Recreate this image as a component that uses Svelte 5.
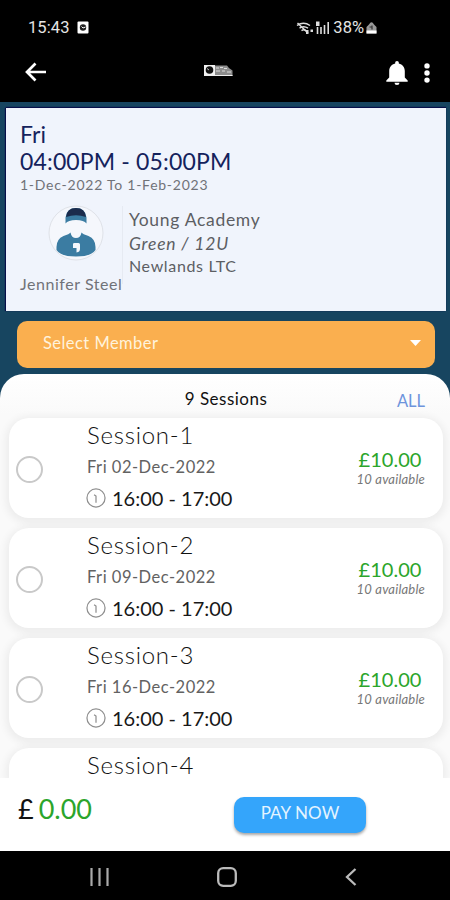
<script>
  // Sessions still open for booking; the last one sits behind the payment bar
  const sessions = [
    { id: 1, name: 'Session-1', date: 'Fri 02-Dec-2022', time: '16:00 - 17:00', price: '£10.00', available: 10 },
    { id: 2, name: 'Session-2', date: 'Fri 09-Dec-2022', time: '16:00 - 17:00', price: '£10.00', available: 10 },
    { id: 3, name: 'Session-3', date: 'Fri 16-Dec-2022', time: '16:00 - 17:00', price: '£10.00', available: 10 },
    { id: 4, name: 'Session-4', collapsed: true },
  ];

  let selected = $state([]);

  let total = $derived((selected.length * 10).toFixed(2));

  function toggle(id) {
    selected = selected.includes(id) ? selected.filter((s) => s !== id) : [...selected, id];
  }

  function selectAll() {
    selected = sessions.map((s) => s.id);
  }
</script>

<div class="screen">
  <!-- Status bar -->
  <div class="status-bar">
    <span class="clock">15:43</span>
    <svg class="alarm" width="12" height="13" viewBox="0 0 12 13" aria-hidden="true">
      <rect x="0.5" y="0.5" width="11" height="12" rx="1" fill="#fff" />
      <circle cx="6" cy="6.5" r="3.2" fill="#222" />
      <path d="M4.5 5.5 6 7l2.5-1" fill="none" stroke="#fff" stroke-width="1" />
    </svg>
    <div class="signals">
      <svg width="35" height="14" viewBox="0 0 35 14" aria-hidden="true">
        <g fill="none" stroke="#ddd" stroke-width="1.5">
          <path d="M1 4.500q6.500-4.500 13 0" />
          <path d="M3.500 7.200q4-2.800 8.500 0" />
          <path d="M5.500 9.700q2.500-1.800 4.500 0" />
          <path d="M1.500 2 12 12" />
        </g>
        <path d="M10 9h2.500v4H10zM14.500 8.500h2.500v2.500h-2.500z" fill="#ddd" />
        <path d="M20 .500h3.500v4.500H20z" fill="#ddd" />
        <path d="M21.500 6v7M25 6v7M28.500 4v9M32.200 1v12" stroke="#ddd" stroke-width="1.600" />
      </svg>
      <span class="battery">38%</span>
      <svg width="11" height="13" viewBox="0 0 11 13" aria-hidden="true">
        <path d="M3 3.500Q5.500-1 8 3.500L10.500 6v6.500H.500V6z" fill="#999" />
        <path d="M.500 9.500h10v3H.500z" fill="#fff" />
        <path d="M3.500 6h3M6 4.500v4" stroke="#333" stroke-width="1.200" />
      </svg>
    </div>
  </div>

  <!-- App bar -->
  <header class="app-bar">
    <button class="icon-btn" aria-label="Back">
      <svg width="22" height="20" viewBox="0 0 22 20">
        <path d="M21 10H2M10.500 1.500 2 10l8.500 8.500" fill="none" stroke="#fff" stroke-width="2.700" />
      </svg>
    </button>
    <svg class="logo" width="29" height="12" viewBox="0 0 29 12" aria-hidden="true">
      <path d="M0 0h11v11H0z" fill="#f2f2f2" />
      <circle cx="5.500" cy="5" r="3.800" fill="#111" />
      <path d="M3 3.500 5 5" fill="none" stroke="#bbb" />
      <path d="M11 .500h12q1.500 3 5.500 5v5.500H11z" fill="#8d8d8d" />
      <path d="M12 3h3M16 2.500h3M20 3.500h3M12 6h4M18 6h3M23 7h4" stroke="#ddd" />
      <path d="M0 10.500h28.500" stroke="#eee" />
    </svg>
    <div class="actions">
      <svg width="22" height="24" viewBox="0 0 22 24" aria-label="Notifications">
        <path d="M11 0c-1.100 0-1.800.800-1.800 1.800v.600C5.500 3.300 3.200 6.300 3.200 10v6.500L.300 19.500v1.200h21.400v-1.200L18.800 16.500V10c0-3.700-2.300-6.700-6-7.600v-.600C12.800.800 12.100 0 11 0zM8.500 21.700a2.500 2.200 0 0 0 5 0z" fill="#fff" />
      </svg>
      <svg class="more" width="6" height="20" viewBox="0 0 6 20" aria-label="More">
        <g fill="#fff">
          <circle cx="3" cy="2.900" r="2.700" />
          <circle cx="3" cy="10" r="2.700" />
          <circle cx="3" cy="17.100" r="2.700" />
        </g>
      </svg>
    </div>
  </header>

  <section class="hero">
    <div class="class-card">
      <div class="day">Fri</div>
      <div class="hours">04:00PM - 05:00PM</div>
      <div class="range">1-Dec-2022 To 1-Feb-2023</div>
      <div class="class-info">
        <div class="coach">
          <svg class="avatar" width="56" height="56" viewBox="0 0 56 56" aria-hidden="true">
            <circle cx="28" cy="28" r="27" fill="#f5f7fc" stroke="#dfe2e8" />
            <path d="M17.500 18.500V12.500Q18.500 3 28 3t10.500 9.500v6q-2.500-3.500-10.500-3.500t-10.500 3.500z" fill="#3b7ca2" />
            <path d="M18 12Q19 3 28 3t10 9q-10-3.500-20 0z" fill="#1b2b4c" />
            <path d="M22.500 27.500q1 5.500 5.500 5.500t5.500-5.500q1 1.500 7 3.500 7 3 7 11v3q-4 6.500-19.500 6.500T8.500 45v-3q0-8 7-11 6-2 7-3.500z" fill="#3b7ca2" />
            <path d="M25 39q0-1 1.500-1h4q1.500 0 1.500 1.500V44q0 3-3.500 3.500V43H25z" fill="#f5f7fc" />
          </svg>
          <span class="coach-name">Jennifer Steel</span>
        </div>
        <div class="venue">
          <span>Young Academy</span>
          <span class="level">Green / 12U</span>
          <span class="club">Newlands LTC</span>
        </div>
      </div>
    </div>

    <button class="member-select">
      <span>Select Member</span>
      <svg width="11" height="6" viewBox="0 0 11 6" aria-hidden="true"><path d="M0 0h11L5.500 6z" fill="#fff" /></svg>
    </button>
  </section>

  <main class="sheet">
    <div class="sheet-head">
      <span class="count">9 Sessions</span>
      <button class="all" onclick={selectAll}>ALL</button>
    </div>
    <div class="list">
      {#each sessions as session (session.id)}
        <article class="session" class:collapsed={session.collapsed}>
          {#if session.collapsed}
            <div class="name">{session.name}</div>
          {:else}
            <button
              class="radio"
              class:checked={selected.includes(session.id)}
              aria-label="Select {session.name}"
              onclick={() => toggle(session.id)}
            ></button>
            <div class="details">
              <div class="name">{session.name}</div>
              <div class="date">{session.date}</div>
              <div class="time">
                <svg width="20" height="20" viewBox="0 0 21 21" aria-hidden="true">
                  <circle cx="10.500" cy="10.500" r="9.500" fill="none" stroke="#8f8f8f" stroke-width="1.300" />
                  <path d="M8.500 7l2 1.500v7" fill="none" stroke="#8f8f8f" stroke-width="1.300" />
                </svg>
                <span>{session.time}</span>
              </div>
            </div>
            <div class="cost">
              <div class="price">{session.price}</div>
              <div class="available">{session.available} available</div>
            </div>
          {/if}
        </article>
      {/each}
    </div>
  </main>

  <footer class="pay-bar">
    <div class="total"><span class="currency">£</span><span class="amount">{total}</span></div>
    <button class="pay">PAY NOW</button>
  </footer>

  <!-- Android navigation -->
  <nav class="nav-bar">
    <svg width="19" height="18" viewBox="0 0 19 18" aria-label="Recents">
      <path d="M1.500 0v18M9.500 0v18M17.500 0v18" stroke="#aaa" stroke-width="2.200" />
    </svg>
    <svg width="20" height="20" viewBox="0 0 20 20" aria-label="Home">
      <rect x="1.200" y="1.200" width="17.600" height="17.600" rx="5" fill="none" stroke="#bbb" stroke-width="2.300" />
    </svg>
    <svg width="12" height="18" viewBox="0 0 12 18" aria-label="Back">
      <path d="M10.500 1 2 9l8.500 8" fill="none" stroke="#bbb" stroke-width="2.300" />
    </svg>
  </nav>
</div>

<style>
  :global(body) {
    margin: 0;
    background: #000;
  }

  .screen {
    width: 450px;
    height: 900px;
    display: flex;
    flex-direction: column;
    overflow: hidden;
    background: #000;
    font-family: Lato, 'Open Sans', sans-serif;
    white-space: nowrap;
  }

  svg {
    display: block;
    flex-shrink: 0;
  }

  button {
    font-family: inherit;
    border: 0;
    padding: 0;
    background: none;
    cursor: pointer;
  }

  /* Status bar */
  .status-bar {
    height: 55px;
    flex-shrink: 0;
    box-sizing: border-box;
    padding: 0 73px 0 28px;
    display: flex;
    align-items: center;
    color: #e4e4e4;
    font-family: Roboto, sans-serif;
    font-size: 16.5px;
  }

  .clock {
    letter-spacing: 0.1px;
  }

  .alarm {
    margin-left: 7px;
  }

  .signals {
    margin-left: auto;
    display: flex;
    align-items: center;
  }

  .battery {
    margin: 0 2px 0 2px;
  }

  /* App bar */
  .app-bar {
    height: 47px;
    flex-shrink: 0;
    box-sizing: border-box;
    padding: 0 20px 13px 25px;
    display: flex;
    align-items: center;
  }

  .logo {
    margin: -3px 0 0 157px;
  }

  .actions {
    margin: 2px 0 0 auto;
    display: flex;
    align-items: center;
    gap: 16px;
  }

  /* Class summary */
  .hero {
    height: 300px;
    flex-shrink: 0;
    box-sizing: border-box;
    padding: 6px 4px 0 6px;
    background: #174560;
  }

  .class-card {
    height: 203px;
    box-sizing: border-box;
    padding: 13px 14px 0;
    background: #f0f4fc;
    box-shadow: 0 -1px 1px #07104a, -1px 0 1px #07104a;
  }

  .day,
  .hours {
    color: #14225c;
    font-size: 23px;
    line-height: 27px;
  }

  .hours {
    letter-spacing: 0.15px;
  }

  .range {
    color: #707278;
    font-size: 14px;
    line-height: 20px;
    letter-spacing: 0.75px;
  }

  .class-info {
    display: flex;
    margin-top: 11px;
  }

  .coach {
    width: 102px;
    border-right: 1px solid #e6eaf2;
    height: 78px;
    display: flex;
    flex-direction: column;
  }

  .avatar {
    margin: -1px 0 0 28px;
  }

  .coach-name {
    margin-top: 13px;
    font-size: 16px;
    line-height: 20px;
    color: #707278;
    letter-spacing: 0.55px;
  }

  .venue {
    margin: 2px 0 0 6px;
    display: flex;
    flex-direction: column;
    font-size: 17.5px;
    line-height: 23.5px;
    letter-spacing: 0.7px;
    color: #5c5e63;
  }

  .level {
    font-style: italic;
    letter-spacing: 0.8px;
  }

  .club {
    font-size: 16px;
    line-height: 22px;
    letter-spacing: 0.65px;
  }

  .member-select {
    width: 418px;
    height: 47px;
    margin: 10px 0 0 11px;
    padding: 0 14px 3px 26px;
    display: flex;
    align-items: center;
    justify-content: space-between;
    border-radius: 10px;
    background: #faaf4f;
    color: #fff3dc;
    font-size: 16.5px;
    letter-spacing: 0.45px;
  }

  /* Session list */
  .sheet {
    height: 404px;
    margin-top: -28px;
    flex-shrink: 0;
    border-radius: 24px 24px 0 0;
    background: linear-gradient(#fff, #fafafa 40px);
    overflow: hidden;
  }

  .sheet-head {
    height: 44px;
    display: grid;
    grid-template-columns: 1fr auto 1fr;
    align-items: center;
    padding: 4px 25px 0 27px;
    box-sizing: border-box;
  }

  .count {
    grid-column: 2;
    color: #111;
    font-size: 17px;
    letter-spacing: 0.5px;
  }

  .all {
    justify-self: end;
    color: #6d94dc;
    font-size: 16.5px;
    margin-top: 5px;
  }

  .list {
    display: flex;
    flex-direction: column;
    gap: 10px;
    padding: 0 7px 0 9px;
  }

  .session {
    height: 100px;
    flex-shrink: 0;
    box-sizing: border-box;
    padding: 0 18px 0 7px;
    display: flex;
    border-radius: 20px;
    background: #fff;
    box-shadow: 0 2px 9px 3px rgba(0, 0, 0, 0.06);
  }

  /* only the top of the card shows above the payment bar */
  .session.collapsed {
    height: 30px;
    padding: 4px 0 0 78px;
    border-radius: 20px 20px 0 0;
  }

  .session.collapsed .name {
    line-height: 26px;
  }

  .radio {
    width: 27px;
    height: 27px;
    margin-top: 38px;
    box-sizing: border-box;
    border: 2px solid #c9c9c9;
    border-radius: 50%;
  }

  .radio.checked {
    border: 8px solid #34a5fb;
  }

  .details {
    margin-left: 44px;
  }

  .name {
    color: #111;
    font-size: 24px;
    font-weight: 300;
    line-height: 34px;
    letter-spacing: 0.75px;
  }

  .date {
    color: #626262;
    font-size: 16.5px;
    line-height: 30px;
    letter-spacing: 0.5px;
  }

  .time {
    display: flex;
    align-items: center;
    gap: 6px;
    height: 32px;
    margin-left: -1px;
    color: #181818;
    font-size: 20px;
  }

  .cost {
    margin-left: auto;
    padding-top: 29px;
  }

  .price {
    color: #2ba52b;
    font-size: 20px;
    line-height: 25px;
    margin-left: -4px;
  }

  .available {
    color: #777;
    font-size: 13px;
    font-style: italic;
    line-height: 15px;
    letter-spacing: 0.2px;
    margin-left: -6px;
  }

  /* Payment bar */
  .pay-bar {
    height: 73px;
    flex-shrink: 0;
    box-sizing: border-box;
    padding: 0 84px 0 18px;
    display: flex;
    align-items: center;
    justify-content: space-between;
    background: #fff;
  }

  .total {
    display: flex;
    gap: 5px;
    font-size: 27px;
    margin-top: -12px;
  }

  .currency {
    color: #111;
  }

  .amount {
    color: #2ba52b;
  }

  .pay {
    width: 132px;
    height: 36px;
    padding-bottom: 4px;
    border-radius: 10px;
    background: #34a5fb;
    box-shadow: 0 2px 3px rgba(0, 0, 0, 0.35);
    color: #e4f4ff;
    font-size: 17px;
    letter-spacing: 0.1px;
  }

  /* Android navigation */
  .nav-bar {
    height: 49px;
    flex-shrink: 0;
    box-sizing: border-box;
    padding: 2px 93px 0 90px;
    display: flex;
    align-items: center;
    justify-content: space-between;
  }
</style>
